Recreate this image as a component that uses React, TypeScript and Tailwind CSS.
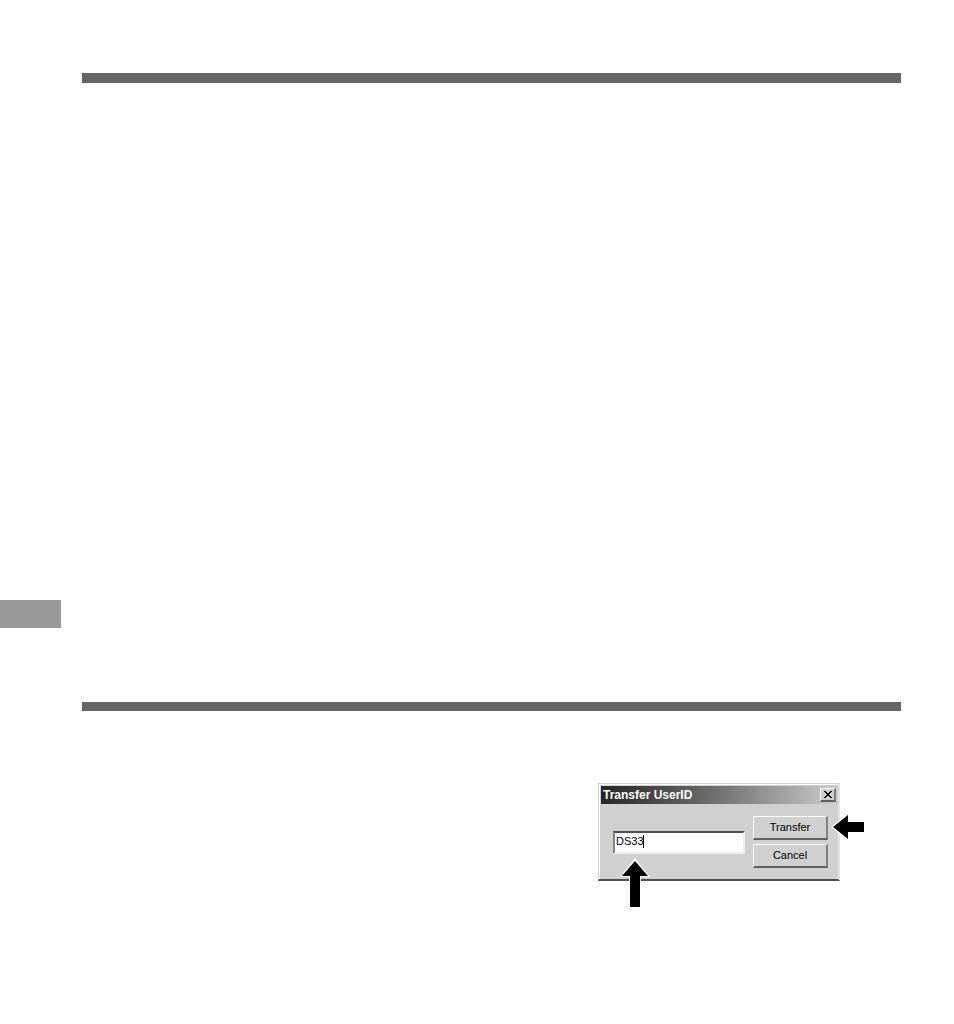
import { useState } from "react";
import type { ReactNode } from "react";

interface DialogButtonProps {
  children: ReactNode;
}

function DialogButton({ children }: DialogButtonProps) {
  return (
    <button
      type="button"
      className="flex h-6 w-full items-center justify-center border-t border-r-2 border-b-2 border-l border-t-white border-r-[#808080] border-b-[#606060] border-l-white bg-[#d0d0d0] pb-0.5 text-[11px] leading-4 text-black"
    >
      {children}
    </button>
  );
}

function TitleBar() {
  return (
    <div className="flex h-[18px] items-center justify-between bg-linear-to-r from-[#262626] to-[#cccccc] px-0.5">
      <h1 className="text-[12px] leading-4 font-bold text-white">Transfer UserID</h1>
      <button
        type="button"
        aria-label="Close"
        className="flex h-[14px] w-4 items-center justify-center border-t border-r-2 border-b-2 border-l border-t-white border-r-[#808080] border-b-[#606060] border-l-white bg-[#d0d0d0]"
      >
        <svg width="8" height="7" viewBox="0 0 8 7" shapeRendering="crispEdges">
          <path
            d="M0 0h2v1h1v1h2v-1h1v-1h2v1h-1v1h-1v1h-1v1h1v1h1v1h1v1h-2v-1h-1v-1h-2v1h-1v1h-2v-1h1v-1h1v-1h1v-1h-1v-1h-1v-1h-1z"
            fill="#000"
          />
        </svg>
      </button>
    </div>
  );
}

function TransferDialog() {
  const [userId, setUserId] = useState("DS33");

  return (
    <section
      role="dialog"
      aria-label="Transfer UserID"
      className="relative w-[242px] border-t border-r-2 border-b-2 border-l border-t-[#d0d0d0] border-r-[#e2e2e2] border-b-[#505050] border-l-[#d0d0d0] bg-[#d0d0d0]"
    >
      <div className="border-t border-l border-white pt-px pl-px">
        <TitleBar />
        <div className="flex items-start gap-2 pt-3 pr-2.5 pb-[11px] pl-3">
          <div className="relative mt-[15px] flex-1">
            <input
              type="text"
              aria-label="User ID"
              value={userId}
              onChange={(e) => setUserId(e.target.value)}
              className="block h-[23px] w-full border-2 border-t-[#505050] border-r-[#eeeeee] border-b-[#eeeeee] border-l-[#808080] bg-white pb-1 pl-px text-[11px] leading-4 text-black outline-none"
            />
            {/* text caret */}
            <span className="absolute top-1 left-[30px] h-[13px] w-px bg-black" />
          </div>
          <div className="flex w-[75px] flex-col gap-1">
            <DialogButton>Transfer</DialogButton>
            <DialogButton>Cancel</DialogButton>
          </div>
        </div>
      </div>

      {/* callout arrows */}
      <svg
        className="absolute top-[74px] left-[21px]"
        width="30"
        height="50"
        viewBox="0 0 30 50"
        aria-hidden="true"
      >
        <path d="M15 0L0 19H9V50H21V19H30Z" fill="#fff" />
        <path d="M15 3L2 18H10V49H20V18H28Z" fill="#000" />
      </svg>
      <svg
        className="absolute top-[29px] left-[232px]"
        width="34"
        height="28"
        viewBox="0 0 34 28"
        aria-hidden="true"
      >
        <path d="M0 14L17 0V8H34V20H17V28Z" fill="#fff" />
        <path d="M2 14L17 2V9H33V19H17V26Z" fill="#000" />
      </svg>
    </section>
  );
}

export default function App() {
  return (
    <main className="flex min-h-screen flex-col bg-white pt-[73px] pb-[143px] font-['Liberation_Sans',Arial,sans-serif]">
      <div className="mr-[53px] ml-[82px] h-2.5 bg-[#666666]" />
      <div className="mt-[517px] h-7 w-[61px] bg-[#999999]" />
      <div className="mt-[74px] mr-[53px] ml-[82px] h-[9px] bg-[#666666]" />
      <div className="mt-[72px] mr-[114px] flex justify-end">
        <TransferDialog />
      </div>
    </main>
  );
}
